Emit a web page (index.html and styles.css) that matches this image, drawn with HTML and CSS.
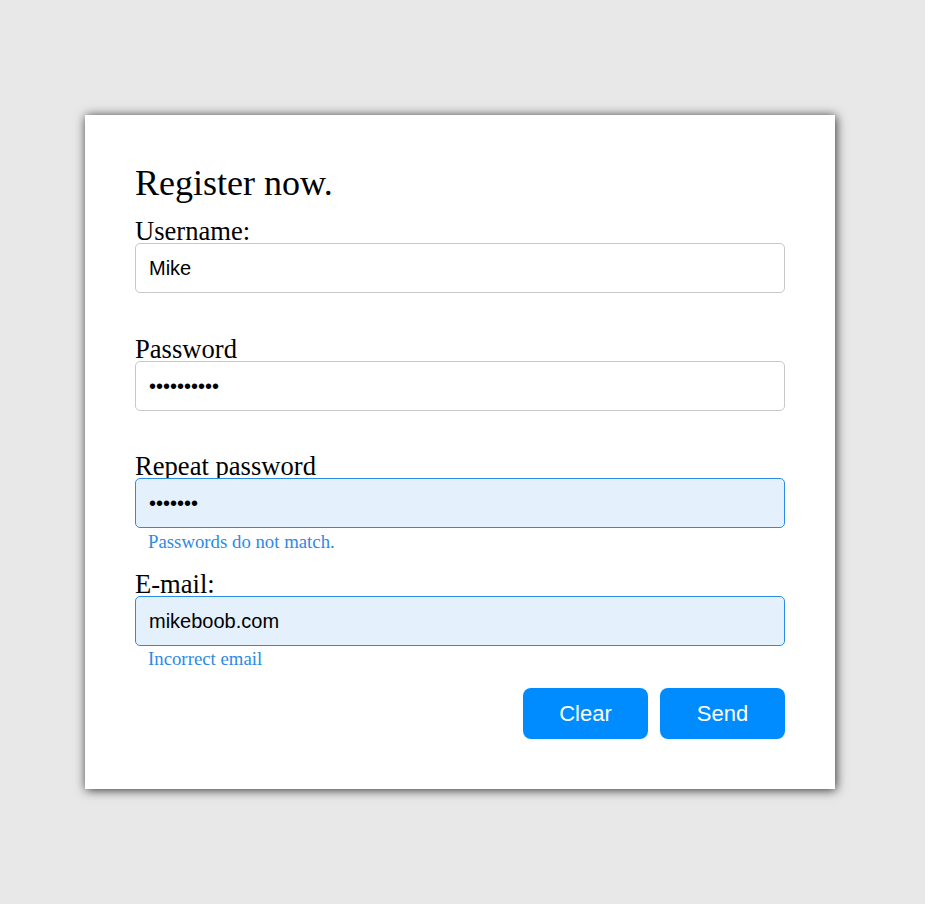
FILE: index.html
```html
<!DOCTYPE html>
<html lang="en">
<head>
<meta charset="utf-8">
<title>Register</title>
<link rel="stylesheet" href="styles.css">
</head>
<body>
<div class="page">
  <form class="card">
    <h1 class="title">Register now.</h1>
    <div class="field">
      <label class="label" for="u">Username:</label>
      <input class="input" id="u" type="text" value="Mike">
      <div class="msg"></div>
    </div>
    <div class="field">
      <label class="label" for="p">Password</label>
      <input class="input" id="p" type="password" value="abcdefghij">
      <div class="msg msg-short"></div>
    </div>
    <div class="field">
      <label class="label" for="r">Repeat password</label>
      <input class="input input-error" id="r" type="password" value="abcdefg">
      <div class="msg">Passwords do not match.</div>
    </div>
    <div class="field">
      <label class="label" for="e">E-mail:</label>
      <input class="input input-error" id="e" type="text" value="mikeboob.com">
      <div class="msg msg-last">Incorrect email</div>
    </div>
    <div class="actions">
      <button type="button" class="btn">Clear</button>
      <button type="button" class="btn">Send</button>
    </div>
  </form>
</div>
</body>
</html>
```
FILE: styles.css
```css
html, body {
  margin: 0;
  padding: 0;
  background: #e8e8e8;
}
.page {
  min-height: 904px;
  display: flex;
  align-items: center;
  justify-content: center;
  padding-right: 5px;
  box-sizing: border-box;
}
.card {
  width: 750px;
  box-sizing: border-box;
  background: #fff;
  padding: 50px;
  box-shadow: 1px 1px 10px rgba(0, 0, 0, 0.8);
  display: flex;
  flex-direction: column;
  font-family: "Liberation Serif", serif;
}
.title {
  margin: 0;
  height: 54px;
  font-size: 36px;
  line-height: 36px;
  font-weight: normal;
  color: #000;
}
.field {
  display: flex;
  flex-direction: column;
}
.label {
  display: block;
  height: 24px;
  font-size: 26.6px;
  line-height: 24px;
  color: #000;
  white-space: nowrap;
}
.input {
  height: 50px;
  box-sizing: border-box;
  margin: 0;
  border: 1px solid #c8c8c8;
  border-radius: 5px;
  padding: 0 13px;
  font-family: "Liberation Sans", Arial, sans-serif;
  font-size: 20px;
  color: #000;
  background: #fff;
  outline: none;
}
.input-error {
  background: #e4f1fd;
  border-color: #2a8ce8;
}
.msg {
  height: 44px;
  box-sizing: border-box;
  padding: 4px 0 0 13px;
  font-size: 18.8px;
  line-height: 20px;
  color: #2d8ae6;
}
.msg-short {
  height: 43px;
}
.msg-last {
  height: 42px;
  padding-top: 3px;
}
.actions {
  display: flex;
  justify-content: flex-end;
  gap: 12px;
}
.btn {
  width: 125px;
  height: 51px;
  border: none;
  border-radius: 8px;
  background: #008cff;
  color: #fff;
  font-family: "Liberation Sans", Arial, sans-serif;
  font-size: 22px;
  padding: 0;
  cursor: pointer;
}
```
